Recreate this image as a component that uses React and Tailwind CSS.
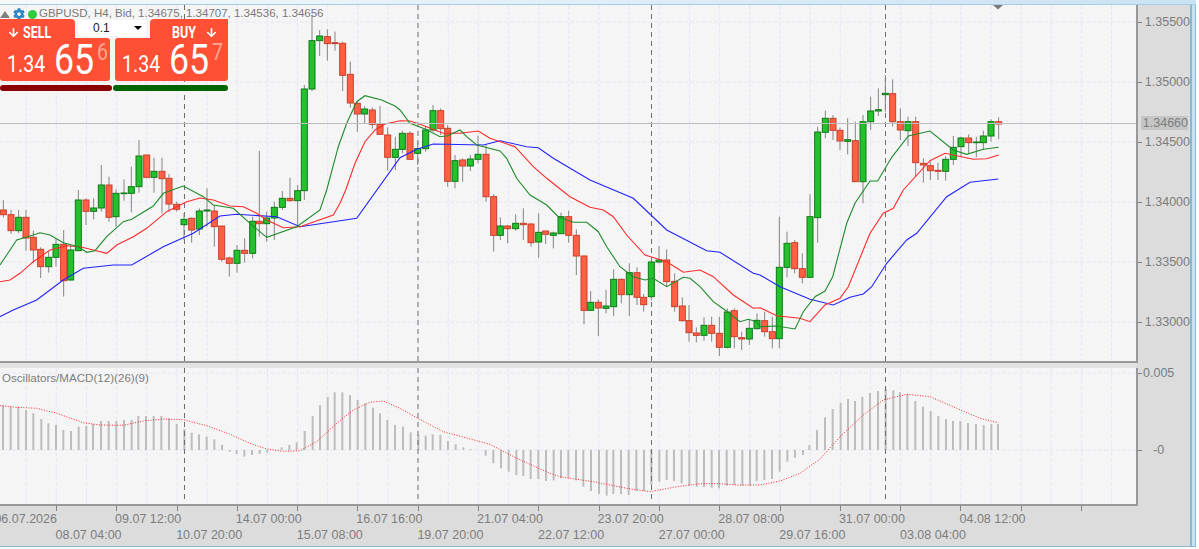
import React from 'react';
import { ArrowDown } from 'lucide-react';
import { FaCog } from 'react-icons/fa';

// candles as read off the chart: x, wick top, body top, body bottom, wick bottom, 1 = up
// every block is in 3x crop units with its own origin
const toCandles = (ox, oy, rows) =>
  rows.map(([x, wt, bt, bb, wb, up]) => ({
    x: ox + x / 3, wt: oy + wt / 3, bt: oy + bt / 3, bb: oy + bb / 3, wb: oy + wb / 3, up,
  }));

const candles = [
  ...toCandles(0, 130, [
    [10, 210, 240, 254, 262, 0], [33, 240, 254, 302, 312, 0], [56, 240, 262, 302, 310, 1],
    [78, 240, 262, 324, 362, 0], [100, 302, 322, 360, 400, 0], [122, 352, 358, 410, 444, 0],
    [146, 365, 382, 410, 428, 1], [168, 325, 343, 382, 410, 1], [191, 300, 343, 452, 500, 0],
    [212, 345, 360, 450, 452, 1], [235, 180, 210, 362, 362, 1], [258, 205, 210, 244, 285, 0],
    [281, 205, 234, 244, 268, 1], [304, 105, 165, 234, 245, 1], [327, 140, 165, 262, 275, 0],
    [348, 178, 190, 260, 290, 1], [372, 148, 189, 191, 212, 1], [394, 110, 170, 190, 247, 1],
    [417, 30, 78, 170, 188, 1], [440, 75, 75, 142, 145, 0], [462, 83, 124, 142, 188, 1],
    [486, 83, 124, 146, 250, 0], [507, 132, 145, 222, 245, 0], [530, 215, 223, 238, 245, 0],
    [552, 250, 268, 284, 330, 1], [575, 262, 265, 300, 338, 0], [598, 235, 243, 297, 315, 1],
    [621, 175, 240, 243, 290, 1], [643, 225, 243, 290, 350, 0], [665, 288, 288, 388, 395, 0],
    [688, 380, 384, 400, 440, 0], [711, 345, 361, 400, 428, 1], [734, 325, 361, 370, 398, 0],
    [758, 260, 274, 370, 385, 1], [778, 63, 274, 281, 320, 0], [800, 245, 264, 281, 335, 1],
    [823, 215, 232, 264, 330, 1], [847, 183, 205, 232, 240, 1], [870, 143, 205, 212, 215, 0],
    [893, 165, 182, 212, 290, 1],
  ]),
  ...toCandles(295, 20, [
    [28, 195, 207, 512, 540, 1], [51, -15, 62, 207, 213, 1], [74, 30, 48, 62, 108, 1],
    [97, 28, 50, 71, 122, 0], [120, 35, 68, 71, 92, 0], [143, 65, 70, 166, 213, 0],
    [166, 125, 163, 249, 263, 0], [187, 245, 250, 282, 335, 0], [209, 258, 267, 282, 310, 1],
    [232, 262, 270, 313, 326, 0], [255, 258, 313, 343, 345, 0], [278, 322, 345, 412, 452, 0],
    [301, 350, 388, 412, 450, 1],
  ]),
  ...toCandles(400, 90, [
    [7, 122, 130, 178, 190, 1], [30, 124, 130, 208, 208, 0], [53, 155, 176, 190, 225, 1],
    [77, 108, 120, 176, 185, 1], [99, 45, 62, 120, 125, 1], [122, 55, 62, 116, 135, 0],
    [143, 105, 115, 274, 290, 0], [165, 195, 212, 274, 295, 1], [188, 205, 210, 228, 275, 0],
    [211, 195, 207, 228, 243, 1], [234, 137, 193, 208, 220, 1], [258, 165, 193, 320, 335, 0],
    [281, 312, 320, 436, 485, 0], [301, 382, 408, 436, 450, 1], [323, 405, 408, 416, 460, 0],
    [347, 373, 400, 416, 422, 1], [370, 355, 400, 404, 450, 0], [393, 400, 402, 458, 470, 0],
    [416, 370, 427, 456, 503, 1], [437, 422, 423, 433, 462, 0], [460, 425, 429, 436, 475, 1],
    [483, 368, 380, 431, 432, 1], [506, 362, 380, 436, 458, 0], [529, 418, 436, 498, 555, 0],
    [552, 497, 498, 661, 703, 0], [572, 603, 637, 661, 662, 1], [595, 628, 637, 654, 738, 0],
    [618, 600, 648, 655, 670, 1], [641, 538, 568, 650, 678, 1], [664, 565, 568, 614, 640, 0],
    [688, 520, 548, 614, 678, 1], [711, 532, 548, 622, 645, 0], [731, 612, 622, 644, 665, 0],
    [754, 505, 516, 620, 632, 1], [777, 468, 510, 516, 520, 1], [800, 478, 510, 575, 590, 0],
    [824, 550, 574, 650, 665, 0], [847, 622, 648, 692, 695, 0], [867, 645, 692, 728, 755, 0],
    [889, 712, 729, 736, 757, 0], [912, 682, 706, 736, 752, 1], [935, 680, 706, 730, 755, 0],
    [958, 680, 730, 772, 798, 0], [982, 655, 666, 772, 775, 1], [1003, 655, 662, 740, 775, 0],
    [1025, 725, 743, 747, 780, 0], [1048, 690, 715, 747, 765, 1], [1071, 670, 691, 716, 718, 1],
  ]),
  ...toCandles(760, 70, [
    [14, 725, 752, 785, 800, 0], [37, 740, 785, 806, 835, 0], [58, 440, 592, 806, 835, 1],
    [81, 485, 520, 592, 622, 1], [104, 510, 518, 596, 610, 0], [127, 550, 596, 622, 640, 0],
    [150, 373, 440, 622, 622, 1], [173, 170, 186, 443, 518, 1], [196, 122, 145, 187, 205, 1],
    [219, 135, 145, 181, 210, 0], [240, 173, 181, 213, 240, 0], [263, 145, 209, 214, 253, 1],
    [286, 155, 212, 335, 335, 0], [309, 135, 155, 335, 400, 1], [332, 80, 123, 155, 180, 1],
    [355, 55, 119, 123, 138, 1], [376, 15, 70, 74, 125, 1], [398, 28, 71, 155, 170, 0],
    [421, 115, 155, 180, 210, 0], [444, 140, 155, 182, 228, 1], [467, 140, 155, 278, 320, 0],
    [490, 265, 280, 285, 338, 0], [511, 275, 287, 302, 330, 0], [534, 278, 301, 304, 330, 0],
    [557, 258, 268, 304, 332, 1], [580, 198, 232, 268, 285, 1], [603, 200, 204, 230, 262, 1],
    [626, 193, 204, 218, 250, 0], [649, 200, 216, 218, 262, 1], [670, 182, 198, 218, 238, 1],
    [693, 148, 155, 198, 215, 1], [716, 142, 155, 162, 208, 0],
  ]),
];

const pts = (ox, oy, rows) => rows.map(([x, y]) => `${(ox + x / 3).toFixed(1)},${(oy + y / 3).toFixed(1)}`).join(' ');

const greenLine = [
  pts(0, 130, [[0, 405], [20, 375], [50, 330], [90, 318], [120, 308], [150, 315], [190, 338], [235, 350], [260, 367], [285, 362], [320, 320], [370, 275], [395, 268], [460, 228], [490, 190], [550, 168], [610, 200], [640, 225], [700, 235], [750, 280], [800, 322], [890, 290], [960, 240]]),
  pts(295, 20, [[95, 510], [130, 380], [155, 310], [185, 245], [210, 227], [260, 240], [300, 258]]),
  pts(400, 90, [[0, 60], [30, 100], [77, 118], [120, 140], [143, 137], [180, 120], [200, 140], [230, 165], [300, 183], [320, 205], [350, 265], [390, 315], [440, 345], [475, 380], [520, 397], [560, 397], [595, 425], [620, 470], [660, 530], [700, 560], [735, 570], [760, 565], [800, 590], [850, 562], [870, 565], [900, 590], [940, 635], [975, 660], [1020, 695], [1045, 688], [1070, 695]]),
  pts(760, 70, [[0, 770], [50, 768], [105, 777], [130, 725], [165, 680], [195, 663], [218, 620], [260, 460], [285, 400], [330, 333], [353, 333], [395, 262], [445, 198], [510, 183], [580, 240], [620, 253], [670, 238], [716, 232]]),
].join(' ');

const redLine = [
  pts(0, 130, [[0, 455], [30, 450], [60, 430], [100, 395], [150, 360], [200, 347], [240, 350], [280, 360], [320, 370], [350, 345], [400, 320], [440, 295], [500, 245], [560, 215], [600, 204], [640, 210], [690, 228], [730, 230], [770, 250], [800, 270], [850, 293], [900, 290], [1000, 255], [1020, 220]]),
  pts(295, 20, [[152, 510], [180, 430], [210, 365], [240, 330], [270, 312]]),
  pts(400, 90, [[0, 92], [30, 93], [60, 103], [130, 130], [180, 130], [235, 123], [270, 145], [345, 170], [400, 230], [440, 265], [510, 320], [570, 352], [610, 360], [640, 380], [680, 435], [735, 495], [800, 515], [850, 547], [900, 540], [940, 560], [1000, 615], [1060, 655]]),
  pts(760, 70, [[0, 713], [50, 737], [120, 745], [150, 755], [195, 705], [240, 685], [265, 650], [330, 490], [370, 430], [400, 415], [430, 360], [510, 272], [555, 250], [640, 268], [680, 266], [716, 255]]),
].join(' ');

const blueLine = [
  pts(0, 130, [[-10, 565], [40, 540], [110, 510], [190, 450], [250, 415], [340, 405], [395, 405], [490, 350], [580, 310], [660, 258], [710, 253], [830, 260], [900, 290], [1070, 265]]),
  pts(400, 90, [[0, 203], [50, 178], [100, 162], [250, 165], [300, 152], [380, 170], [415, 173], [460, 205], [570, 270], [700, 325], [800, 420], [920, 482], [960, 487], [1060, 550]]),
  pts(760, 70, [[0, 615], [60, 650], [150, 688], [220, 705], [270, 682], [310, 672], [335, 650], [380, 580], [440, 510], [470, 490], [560, 380], [630, 337], [715, 327]]),
].join(' ');

const signalLine = [
  pts(0, 355, [[0, 152], [50, 157], [110, 160], [170, 175], [250, 203], [300, 210], [370, 211], [430, 198], [490, 192], [550, 194], [620, 212], [690, 238], [750, 265], [800, 282], [850, 289], [900, 287], [950, 260], [1010, 205], [1060, 165], [1110, 142], [1150, 138], [1200, 160]]),
  pts(400, 355, [[50, 188], [130, 230], [270, 268], [350, 310], [450, 355], [480, 365], [590, 382], [680, 400], [750, 410], [830, 395], [900, 386], [960, 386], [1010, 390], [1080, 390], [1140, 378], [1200, 355]]),
  pts(800, 355, [[60, 312], [120, 245], [190, 180], [250, 135], [320, 118], [390, 125], [470, 160], [540, 190], [595, 203]]),
].join(' ');

const toBars = (ox, rows) => rows.map(([x, y]) => ({ x: ox + x / 3, y: 355 + y / 3 }));

const macdBars = [
  ...toBars(0, [[9, 150], [32, 155], [55, 155], [78, 165], [100, 175], [124, 192], [145, 205], [168, 210], [190, 225], [213, 228], [236, 215], [259, 213], [279, 207], [303, 198], [326, 198], [349, 198], [372, 195], [395, 195], [415, 183], [438, 183], [461, 183], [484, 183], [507, 190], [530, 207], [553, 222], [575, 233], [597, 238], [620, 245], [643, 253], [666, 270], [689, 290], [710, 297], [733, 305], [756, 300], [779, 297], [802, 293], [845, 277], [868, 270], [890, 262], [914, 228], [938, 183], [960, 150], [983, 126], [1004, 112], [1027, 112], [1050, 120], [1073, 135], [1096, 145], [1119, 158], [1140, 175], [1162, 195], [1185, 210]]),
  ...toBars(400, [[9, 215], [32, 232], [55, 240], [77, 242], [98, 238], [121, 240], [144, 258], [167, 268], [190, 277], [212, 283], [257, 302], [280, 325], [303, 340], [326, 350], [349, 360], [370, 363], [392, 372], [415, 372], [438, 378], [461, 376], [483, 370], [505, 370], [528, 376], [550, 395], [573, 408], [597, 417], [620, 422], [640, 417], [663, 417], [686, 420], [709, 408], [732, 408], [754, 390], [778, 380], [800, 375], [822, 378], [845, 385], [868, 392], [890, 395], [912, 396], [935, 398], [957, 400], [980, 392], [1003, 390], [1027, 392], [1050, 392], [1070, 378], [1093, 375], [1116, 372], [1139, 350], [1162, 320], [1185, 308]]),
  ...toBars(800, [[9, 300], [28, 270], [51, 225], [75, 187], [98, 162], [122, 143], [144, 132], [165, 138], [187, 126], [210, 114], [234, 108], [257, 100], [280, 106], [300, 112], [322, 118], [346, 138], [369, 155], [392, 168], [415, 183], [438, 192], [459, 198], [481, 198], [504, 204], [528, 207], [551, 210], [574, 207], [594, 207]]),
];

const gridX = Array.from({ length: 37 }, (_, i) => 26.2 + i * 30.15);
const sessions = [184.5, 418, 651.5, 885.5];
const prices = ['1.35500', '1.35000', '1.34500', '1.34000', '1.33500', '1.33000'];
const timeTop = ['06.07.2026', '09.07 12:00', '14.07 00:00', '16.07 16:00', '21.07 04:00', '23.07 20:00', '28.07 08:00', '31.07 00:00', '04.08 12:00'];
const timeBottom = ['08.07 04:00', '10.07 20:00', '15.07 08:00', '19.07 20:00', '22.07 12:00', '27.07 00:00', '29.07 16:00', '03.08 04:00'];
const ticks = Array.from({ length: 18 }, (_, i) => i);

function MainChart() {
  return (
    <svg viewBox="0 5 1136 356" className="block w-[1136px] h-[356px]">
      {gridX.map(x => (
        <line key={x} x1={x} x2={x} y1="5" y2="361" stroke="#e6e6f8" strokeDasharray="4 2" />
      ))}
      {[22, 82, 142, 202, 262, 322].map(y => (
        <line key={y} x1="0" x2="1136" y1={y} y2={y} stroke="#e6e6f8" strokeDasharray="4 2" />
      ))}
      {sessions.map(x => (
        <line key={x} x1={x} x2={x} y1="5" y2="361" stroke="#6e6e6e" strokeDasharray="5 4" />
      ))}
      <polygon points="993,5 1003,5 998,9.5" fill="#7a7a7a" />
      {candles.map(c => (
        <g key={c.x}>
          <line x1={c.x} x2={c.x} y1={c.wt} y2={c.wb} stroke="#858585" />
          <rect
            x={c.x - 3}
            y={c.bt}
            width="6"
            height={Math.max(c.bb - c.bt, 0.5)}
            fill={c.up ? '#25c02d' : '#ff5f42'}
            stroke={c.up ? '#0f7a16' : '#c8402c'}
          />
        </g>
      ))}
      <polyline points={blueLine} fill="none" stroke="#2222ff" strokeWidth="1.1" />
      <polyline points={redLine} fill="none" stroke="#ff2a2a" strokeWidth="1.1" />
      <polyline points={greenLine} fill="none" stroke="#1f8a2a" strokeWidth="1.1" />
      <line x1="0" x2="1136" y1="123.5" y2="123.5" stroke="#bcbcbc" />
    </svg>
  );
}

function MacdChart() {
  return (
    <svg viewBox="0 368 1136 136" className="block w-[1136px] h-[136px]">
      {gridX.map(x => (
        <line key={x} x1={x} x2={x} y1="368" y2="504" stroke="#e6e6f8" strokeDasharray="4 2" />
      ))}
      {[373, 450].map(y => (
        <line key={y} x1="0" x2="1136" y1={y} y2={y} stroke="#e6e6f8" strokeDasharray="4 2" />
      ))}
      {macdBars.map(b => (
        <rect key={b.x} x={b.x - 1} y={Math.min(b.y, 450)} width="2" height={Math.abs(b.y - 450)} fill="#bdbdbd" />
      ))}
      {sessions.map(x => (
        <line key={x} x1={x} x2={x} y1="368" y2="502" stroke="#6e6e6e" strokeDasharray="5 4" />
      ))}
      <polyline points={signalLine} fill="none" stroke="#ff2222" strokeDasharray="1 1.6" />
    </svg>
  );
}

function QuoteDigits({ last }) {
  return (
    <div className="flex items-end pl-[7px] text-white font-['Roboto',sans-serif] leading-none">
      <span className="w-[47px] text-[23px] mb-[8px] origin-left scale-x-[0.85]">1.34</span>
      <span className="w-[43px] text-[43px] mb-[3px] origin-left scale-x-[0.83]">65</span>
      <span className="self-start mt-[3px] text-[23px] origin-left scale-x-[0.85] text-[#ffa595]">{last}</span>
    </div>
  );
}

function TradePanel() {
  return (
    <div className="absolute left-0 top-[14px] w-[228px]">
      <div className="flex justify-between h-[19px] font-['Roboto',sans-serif] font-bold text-white text-[16px]">
        <div className="w-[75px] bg-[#ff5036] rounded-tr-[4px] flex items-center pl-[7px] pt-[8px]">
          <ArrowDown size={13} strokeWidth={3} />
          <span className="ml-[3px] origin-left scale-x-[0.78]">SELL</span>
        </div>
        <div className="mt-px w-[69px] h-[16px] bg-white flex items-center justify-between pl-[15px] pr-[5px] text-[12px] font-normal text-[#222] font-['Liberation_Sans',sans-serif]">
          <span>0.1</span>
          <span className="w-0 h-0 border-x-[4px] border-x-transparent border-t-[4px] border-t-black" />
        </div>
        <div className="w-[78px] bg-[#ff5036] rounded-tl-[4px] flex items-center pl-[22px] pt-[8px]">
          <span className="w-[33px] origin-left scale-x-[0.78]">BUY</span>
          <ArrowDown size={13} strokeWidth={3} />
        </div>
      </div>
      <div className="flex gap-[5px] h-[43px]">
        <div className="w-[110px] bg-[#ff5036] rounded-b-[3px] rounded-tr-[3px]">
          <QuoteDigits last="6" />
        </div>
        <div className="w-[113px] bg-[#ff5036] rounded-b-[3px] rounded-tl-[3px]">
          <QuoteDigits last="7" />
        </div>
      </div>
      <div className="flex gap-px mt-[4px] h-[6px]">
        <div className="w-[112px] rounded-full bg-[#8b0000]" />
        <div className="w-[115px] rounded-full bg-[#006400]" />
      </div>
    </div>
  );
}

function Legend() {
  return (
    <div className="absolute left-0 top-[2px] flex items-center h-[14px] text-[11.5px] text-[#7a7a7a]">
      <span className="w-0 h-0 border-x-[5px] border-x-transparent border-b-[7px] border-b-[#808080]" />
      <FaCog size={12} className="ml-[3px] text-[#2f86c4]" />
      <span className="ml-[3px] w-[9px] h-[9px] rounded-full bg-[#2ecc40]" />
      <span className="ml-[2px] whitespace-nowrap">GBPUSD, H4, Bid, 1.34675, 1.34707, 1.34536, 1.34656</span>
    </div>
  );
}

function AxisRow({ label, className = '' }) {
  return (
    <div className={`flex items-center ${className}`}>
      <span className="w-[4px] h-px bg-[#808080]" />
      <span className="w-[47px] ml-px text-right">{label}</span>
    </div>
  );
}

export default function App() {
  return (
    <div className="w-[1199px] h-[549px] bg-white flex flex-col overflow-hidden font-['Liberation_Sans',sans-serif] text-[12.5px] text-[#7d7d7d]">
      <div className="h-[5px] w-[1196px] shrink-0 bg-linear-to-r from-[#f4f9fc] to-[#c9e2f3] border-b border-[#a9cde4]" />

      <div className="flex flex-1 min-h-0">
        <div className="w-[1190px] flex bg-[#dcdcdc]">
          <div className="w-[1138px]">
            <div className="relative h-[358px] bg-[#f5f5f5] border-r-2 border-b-2 border-[#999]">
              <MainChart />
              <Legend />
              <TradePanel />
            </div>
            <div className="h-[5px] w-[1136px] bg-[#e2e2e2]" />
            <div className="relative h-[138px] bg-[#f5f5f5] border-r-2 border-b-2 border-[#999]">
              <MacdChart />
              <span className="absolute left-[2px] top-[1px] text-[11.6px] whitespace-nowrap">Oscillators/MACD(12)(26)(9)</span>
            </div>
            <div className="overflow-hidden">
              <div className="flex pl-[56px] h-[5px]">
                {ticks.map(i => (
                  <span key={i} className="w-[60.3px] shrink-0 border-l border-[#808080]" />
                ))}
              </div>
              <div className="flex ml-[-5.6px] h-[16px] items-center">
                {timeTop.map(t => (
                  <span key={t} className="w-[120.65px] shrink-0 whitespace-nowrap">{t}</span>
                ))}
              </div>
              <div className="flex ml-[55.5px] h-[16px] items-center">
                {timeBottom.map(t => (
                  <span key={t} className="w-[120.65px] shrink-0 whitespace-nowrap">{t}</span>
                ))}
              </div>
            </div>
          </div>

          <div className="w-[52px] flex flex-col">
            <div className="relative h-[358px] overflow-hidden">
              <div className="mt-[-13px]">
                {prices.map(p => (
                  <AxisRow key={p} label={p} className="h-[60px]" />
                ))}
              </div>
              <div className="absolute left-[3px] top-[111px] w-[47px] h-[14px] bg-[#c6c6c6] flex items-center justify-end">1.34660</div>
            </div>
            <div className="h-[143px] pt-[3px]">
              <div className="flex items-center h-[14px]">
                <span className="w-[4px] h-px bg-[#808080]" />
                <span className="ml-px">0.005</span>
              </div>
              <div className="flex items-center h-[14px] mt-[63px]">
                <span className="w-[4px] h-px bg-[#808080]" />
                <span className="ml-[11px]">-0</span>
              </div>
            </div>
          </div>
        </div>

        <div className="w-[6px] bg-[#c9e2f3] border-l-2 border-r border-[#86b8d8]" />
      </div>

      <div className="h-[3px] w-[1196px] shrink-0 border-t border-[#86b8d8]" />
    </div>
  );
}
